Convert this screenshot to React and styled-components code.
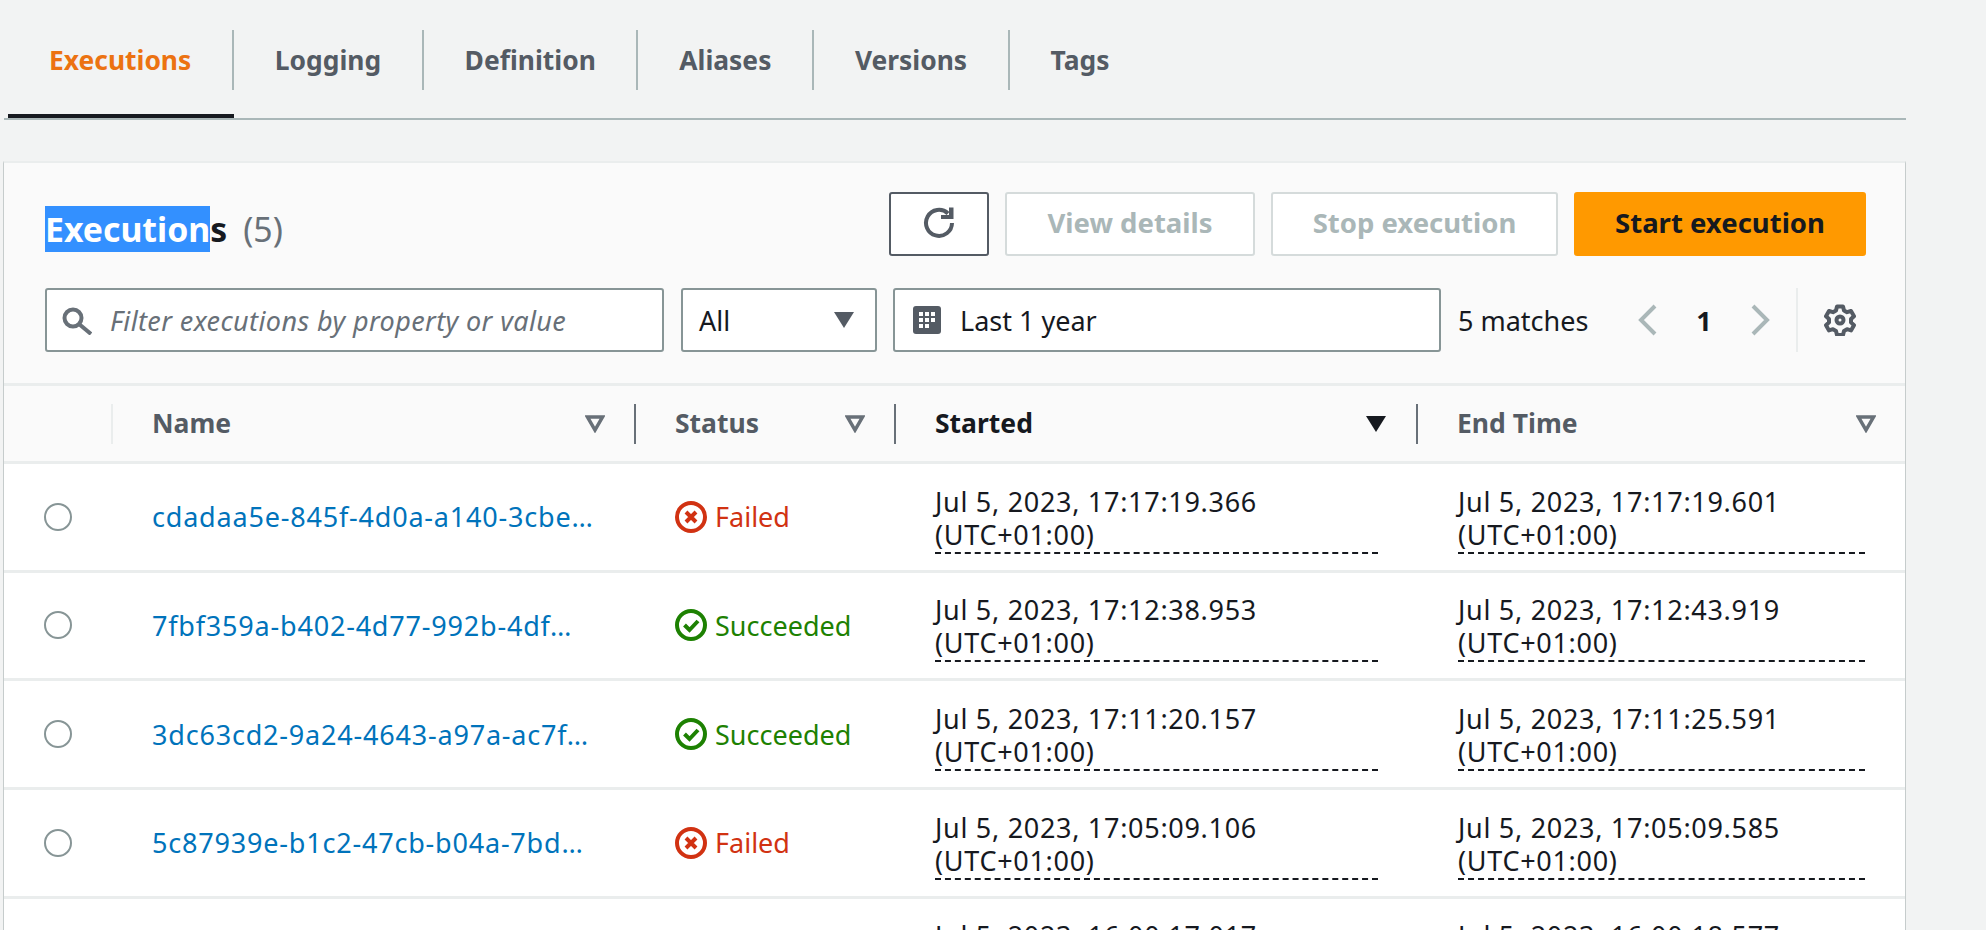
import React from 'react'
import styled, { createGlobalStyle } from 'styled-components'

const GlobalStyle = createGlobalStyle`
  html, body {
    margin: 0;
    padding: 0;
    background: #f2f3f3;
    overflow: hidden;
  }
  * {
    box-sizing: border-box;
  }
`

const Page = styled.div`
  width: 1986px;
  height: 930px;
  overflow: hidden;
  background: #f2f3f3;
  font-family: 'Noto Sans', 'Open Sans', sans-serif;
  font-size: 27px;
  line-height: 33px;
  color: #16191f;
`

const TabBar = styled.nav`
  display: flex;
  width: 1902px;
  height: 120px;
  margin-left: 4px;
  padding-left: 4px;
  border-bottom: 2px solid #aab7b8;
`

const Tab = styled.div`
  height: 118px;
  padding-top: 30px;
  border-bottom: 4px solid ${(p) => (p.$active ? '#16191f' : 'transparent')};
  color: ${(p) => (p.$active ? '#ec7211' : '#545b64')};
  font-size: 26.400px;
  font-weight: 700;
`

const TabLabel = styled.span`
  display: flex;
  align-items: center;
  height: 60px;
  padding: 0 40.500px 0 41px;
  border-right: ${(p) => (p.$last ? 'none' : '2px solid #aab7b8')};
`

const Panel = styled.section`
  width: 1903px;
  margin: 41px 0 0 3px;
  border-left: 1px solid #c6cccc;
  border-right: 1px solid #c6cccc;
  border-top: 2px solid #eaeded;
  background: #fff;
`

const PanelHeader = styled.header`
  height: 223px;
  padding: 29px 39px 0 41px;
  background: #fafafa;
  border-bottom: 3px solid #eaeded;
`

const TitleRow = styled.div`
  display: flex;
  align-items: center;
  justify-content: space-between;
  height: 64px;
`

const Title = styled.h2`
  display: flex;
  align-items: center;
  margin: 11px 0 0 0;
  font-size: 33.800px;
  line-height: 45px;
  font-weight: 700;
`

const Selected = styled.span`
  background: #3390ff;
  color: #fff;
`

const Count = styled.span`
  margin-left: 16px;
  color: #687078;
  font-weight: 400;
`

const Actions = styled.div`
  display: flex;
  gap: 16px;
`

const Button = styled.button`
  display: flex;
  align-items: center;
  justify-content: center;
  width: ${(p) => p.$width}px;
  height: 64px;
  padding: 0 0 4px;
  border-radius: 3px;
  border: 2px solid ${(p) => (p.$primary ? '#ff9900' : p.$icon ? '#545b64' : '#d5dbdb')};
  background: ${(p) => (p.$primary ? '#ff9900' : '#fff')};
  color: ${(p) => (p.$primary ? '#16191f' : p.$icon ? '#545b64' : '#aab7b8')};
  font-family: inherit;
  font-size: 27.500px;
  font-weight: 700;
`

const FilterRow = styled.div`
  display: flex;
  align-items: center;
  height: 64px;
  margin-top: 32px;
`

const Field = styled.div`
  display: flex;
  align-items: center;
  width: ${(p) => p.$width}px;
  height: 64px;
  margin-right: ${(p) => p.$gap}px;
  padding: 0 ${(p) => p.$pad}px;
  border: 2px solid #879596;
  border-radius: 3px;
  background: #fff;
`

const Placeholder = styled.span`
  margin-left: 18px;
  color: #687078;
  font-style: italic;
  letter-spacing: 0.4px;
`

const SelectValue = styled.span`
  flex: 1;
`

const CaretBox = styled.span`
  margin-right: 4px;
`

const RangeValue = styled.span`
  margin-left: 19px;
`

const Matches = styled.span`
  width: 180px;
  margin-left: 1px;
`

const Pager = styled.div`
  display: flex;
  align-items: center;
  height: 64px;
  color: #16191f;
  font-weight: 700;
`

const PageNumber = styled.span`
  width: 92px;
  text-align: center;
`

const Divider = styled.span`
  width: 2px;
  height: 64px;
  margin: 0 26px;
  background: #eaeded;
`

const TableGrid = styled.div`
  display: grid;
  grid-template-columns: 107px 523px 260px 522px 489px;
`

const HeadRow = styled(TableGrid)`
  height: 78px;
  align-items: center;
  background: #fafafa;
  border-bottom: 3px solid #eaeded;
`

const HeadCell = styled.div`
  display: flex;
  align-items: center;
  justify-content: space-between;
  height: 40px;
  padding: 0 29px 0 39px;
  border-left: ${(p) => (p.$blank ? 'none' : `2px solid ${p.$first ? '#eaeded' : '#687078'}`)};
  color: ${(p) => (p.$sorted ? '#16191f' : '#545b64')};
  font-size: 26.500px;
  font-weight: 700;
`

const Row = styled(TableGrid)`
  height: 108.670px;
  align-items: center;
  border-bottom: 3px solid #eaeded;
`

const RadioCell = styled.div`
  display: flex;
  padding-left: 40px;
`

const Radio = styled.span`
  width: 28px;
  height: 28px;
  border: 2px solid #879596;
  border-radius: 50%;
  background: #fff;
`

const NameLink = styled.a`
  display: block;
  padding-left: 41px;
  color: #0073bb;
  letter-spacing: 0.8px;
  white-space: nowrap;
`

const Status = styled.div`
  display: flex;
  align-items: center;
  gap: 8px;
  padding-left: 41px;
  color: ${(p) => (p.$ok ? '#1d8102' : '#d13212')};
`

const TimeCell = styled.div`
  padding: 5px ${(p) => p.$right}px 0 ${(p) => p.$left}px;
  letter-spacing: 0.7px;
`

const TimeText = styled.div`
  padding-bottom: 1px;
  border-bottom: 2px dashed #16191f;
`

const Svg = styled.svg`
  display: block;
  flex: none;
`

const RefreshIcon = () => (
  <Svg width="34" height="34" viewBox="0 0 34 34" fill="none">
    <path d="M26 8.500A13 13 0 1 0 30 18" stroke="#545b64" strokeWidth="4" />
    <path d="M19 14h12.500V2.500h-4.500V10h-8z" fill="#545b64" />
  </Svg>
)

const SearchIcon = () => (
  <Svg width="30" height="30" viewBox="0 0 30 30" fill="none" stroke="#687078" strokeWidth="4">
    <circle cx="11" cy="13" r="8.500" />
    <path d="M17 19l12 10" />
  </Svg>
)

const CaretDown = ({ color = '#545b64' }) => (
  <Svg width="22" height="18" viewBox="0 0 22 18">
    <path d="M1 1h20L11 17z" fill={color} />
  </Svg>
)

const CaretOutline = () => (
  <Svg width="20" height="18" viewBox="0 0 20 18" fill="none">
    <path d="M2.500 2h15L10 15z" stroke="#687078" strokeWidth="3.500" />
  </Svg>
)

const CalendarIcon = () => (
  <Svg width="28" height="28" viewBox="0 0 28 28">
    <rect width="28" height="28" rx="3" fill="#545b64" />
    <g fill="#fff">
      <rect x="6" y="6" width="4" height="4" />
      <rect x="12" y="6" width="4" height="4" />
      <rect x="18" y="6" width="4" height="4" />
      <rect x="6" y="12" width="4" height="4" />
      <rect x="12" y="12" width="4" height="4" />
      <rect x="18" y="12" width="4" height="4" />
      <rect x="6" y="18" width="4" height="4" />
      <rect x="12" y="18" width="4" height="4" />
    </g>
  </Svg>
)

const ChevronIcon = ({ flip }) => (
  <Svg width="20" height="32" viewBox="0 0 20 32" fill="none">
    <path d={flip ? 'M3 2l14 14L3 30' : 'M17 2L3 16l14 14'} stroke="#aab7b8" strokeWidth="4" />
  </Svg>
)

const GearIcon = () => (
  <Svg width="32" height="32" viewBox="0 0 32 32" fill="none" stroke="#545b64" strokeWidth="4">
    <path d="M13 2.500h6l1 4 3 1.700 4-1.200 3 5.200-3 2.800v3.400l3 2.800-3 5.200-4-1.200-3 1.700-1 4h-6l-1-4-3-1.700-4 1.200-3-5.200 3-2.800v-3.400l-3-2.800 3-5.200 4 1.200 3-1.700z" strokeLinejoin="round" />
    <circle cx="16" cy="16" r="3.500" />
  </Svg>
)

const FailedIcon = () => (
  <Svg width="32" height="32" viewBox="0 0 32 32" fill="none" stroke="#d13212" strokeWidth="4">
    <circle cx="16" cy="16" r="14" />
    <path d="M11 11l10 10M21 11L11 21" />
  </Svg>
)

const SucceededIcon = () => (
  <Svg width="32" height="32" viewBox="0 0 32 32" fill="none" stroke="#1d8102" strokeWidth="4">
    <circle cx="16" cy="16" r="14" />
    <path d="M9.500 16l5 5 8.500-9" />
  </Svg>
)

const columns = [
  { key: 'name', label: 'Name', first: true },
  { key: 'status', label: 'Status' },
  { key: 'started', label: 'Started', sorted: true },
  { key: 'end', label: 'End Time' },
]

// the fifth row runs off the bottom of the window, only its dates show
const executions = [
  {
    name: 'cdadaa5e-845f-4d0a-a140-3cbe…',
    status: 'Failed',
    started: 'Jul 5, 2023, 17:17:19.366',
    ended: 'Jul 5, 2023, 17:17:19.601',
  },
  {
    name: '7fbf359a-b402-4d77-992b-4df…',
    status: 'Succeeded',
    started: 'Jul 5, 2023, 17:12:38.953',
    ended: 'Jul 5, 2023, 17:12:43.919',
  },
  {
    name: '3dc63cd2-9a24-4643-a97a-ac7f…',
    status: 'Succeeded',
    started: 'Jul 5, 2023, 17:11:20.157',
    ended: 'Jul 5, 2023, 17:11:25.591',
  },
  {
    name: '5c87939e-b1c2-47cb-b04a-7bd…',
    status: 'Failed',
    started: 'Jul 5, 2023, 17:05:09.106',
    ended: 'Jul 5, 2023, 17:05:09.585',
  },
  {
    started: 'Jul 5, 2023, 16:00:17.017',
    ended: 'Jul 5, 2023, 16:00:18.577',
  },
]

const tabs = ['Executions', 'Logging', 'Definition', 'Aliases', 'Versions', 'Tags']

const App = () => (
  <Page>
    <GlobalStyle />
    <TabBar>
      {tabs.map((tab, i) => (
        <Tab key={tab} $active={i === 0}>
          <TabLabel $last={i === tabs.length - 1}>{tab}</TabLabel>
        </Tab>
      ))}
    </TabBar>
    <Panel>
      <PanelHeader>
        <TitleRow>
          <Title>
            <span>
              <Selected>Execution</Selected>s
            </span>
            <Count>(5)</Count>
          </Title>
          <Actions>
            <Button $icon $width={100}>
              <RefreshIcon />
            </Button>
            <Button $width={250}>View details</Button>
            <Button $width={287}>Stop execution</Button>
            <Button $primary $width={292}>
              Start execution
            </Button>
          </Actions>
        </TitleRow>
        <FilterRow>
          <Field $width={619} $gap={17} $pad={15}>
            <SearchIcon />
            <Placeholder>Filter executions by property or value</Placeholder>
          </Field>
          <Field $width={196} $gap={16} $pad={16}>
            <SelectValue>All</SelectValue>
            <CaretBox>
              <CaretDown />
            </CaretBox>
          </Field>
          <Field $width={548} $gap={16} $pad={18}>
            <CalendarIcon />
            <RangeValue>Last 1 year</RangeValue>
          </Field>
          <Matches>5 matches</Matches>
          <Pager>
            <ChevronIcon />
            <PageNumber>1</PageNumber>
            <ChevronIcon flip />
          </Pager>
          <Divider />
          <GearIcon />
        </FilterRow>
      </PanelHeader>
      <HeadRow>
        <HeadCell $blank />
        {columns.map((col) => (
          <HeadCell key={col.key} $first={col.first} $sorted={col.sorted}>
            {col.label}
            {col.sorted ? <CaretDown color="#16191f" /> : <CaretOutline />}
          </HeadCell>
        ))}
      </HeadRow>
      {executions.map((run) => (
        <Row key={run.started}>
          <RadioCell>
            <Radio />
          </RadioCell>
          <NameLink>{run.name}</NameLink>
          {run.status ? (
            <Status $ok={run.status === 'Succeeded'}>
              {run.status === 'Succeeded' ? <SucceededIcon /> : <FailedIcon />}
              {run.status}
            </Status>
          ) : (
            <span />
          )}
          <TimeCell $left={41} $right={38}>
            <TimeText>{`${run.started} (UTC+01:00)`}</TimeText>
          </TimeCell>
          <TimeCell $left={42} $right={40}>
            <TimeText>{`${run.ended} (UTC+01:00)`}</TimeText>
          </TimeCell>
        </Row>
      ))}
    </Panel>
  </Page>
)

export default App
